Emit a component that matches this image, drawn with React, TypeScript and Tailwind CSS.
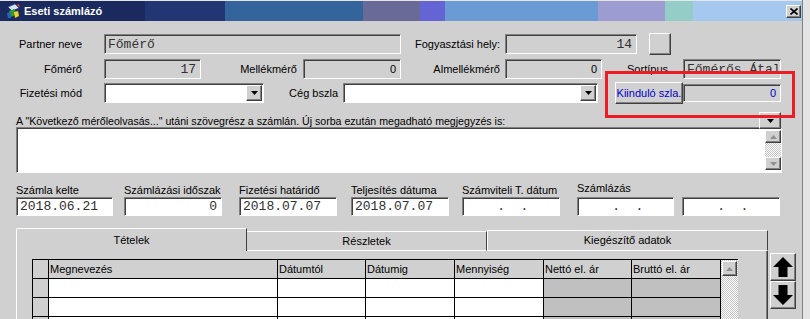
import React from "react";

const SUNK =
  "border border-t-[#808080] border-l-[#808080] border-b-white border-r-white shadow-[inset_1px_1px_0_#404040]";
const RAISE =
  "border border-t-white border-l-white border-b-[#404040] border-r-[#404040] shadow-[inset_-1px_-1px_0_#808080]";
const MONO = "font-['Liberation_Mono','Courier_New',monospace] text-[13px]";

function Field({
  w,
  children,
  white = false,
  right = false,
  mono = true,
  extra = "",
}: {
  w: string;
  children?: React.ReactNode;
  white?: boolean;
  right?: boolean;
  mono?: boolean;
  extra?: string;
}) {
  return (
    <div
      className={`${w} ${SUNK} ${white ? "bg-white" : "bg-[#d0d0d0]"} shrink-0 flex items-center overflow-hidden whitespace-pre ${
        right ? "justify-end pr-[4px]" : "pl-[3px]"
      } ${mono ? MONO + " text-[#303030]" : "text-[11px]"} ${extra}`}
    >
      {children}
    </div>
  );
}

function DownTri({ color = "#000000" }: { color?: string }) {
  return (
    <svg width="7" height="4" viewBox="0 0 7 4">
      <polygon points="0,0 7,0 3.5,4" fill={color} />
    </svg>
  );
}

function UpTri({ color = "#000000" }: { color?: string }) {
  return (
    <svg width="7" height="4" viewBox="0 0 7 4">
      <polygon points="0,4 7,4 3.5,0" fill={color} />
    </svg>
  );
}

function Combo({ w }: { w: string }) {
  return (
    <div className={`${w} h-[20px] ${SUNK} bg-white shrink-0 flex items-center justify-end pr-[1px]`}>
      <div className={`w-[16px] h-[16px] ${RAISE} bg-[#d0d0d0] flex items-center justify-center`}>
        <DownTri />
      </div>
    </div>
  );
}

function TitleIcon() {
  return (
    <svg width="15" height="16" viewBox="0 0 15 16">
      <path d="M2 4 L9 1 L13 5 L6 8 Z" fill="#d8e4f4" stroke="#304e9a" strokeWidth="0.8" />
      <path d="M3 8 L8 6 L11 11 L5 14 Z" fill="#2e9a34" />
      <path d="M8 9 L12 8 L13 13 L9 15 Z" fill="#f2d21e" />
      <path d="M1 10 L4 9 L5 15 L2 15 Z" fill="#2a62c4" />
      <path d="M10 2 L13 1 L14 4 Z" fill="#e04040" />
    </svg>
  );
}

function BigArrow({ up }: { up: boolean }) {
  return (
    <svg width="20" height="20" viewBox="0 0 20 20">
      {up ? (
        <polygon points="10,0 20,10 14.5,10 14.5,20 5.5,20 5.5,10 0,10" fill="#000000" />
      ) : (
        <polygon points="10,20 20,10 14.5,10 14.5,0 5.5,0 5.5,10 0,10" fill="#000000" />
      )}
    </svg>
  );
}

const CHECK =
  "bg-[repeating-conic-gradient(#ffffff_0%_25%,#c4c4c4_0%_50%)] bg-[length:2px_2px]";

const COLS = [
  "w-[16px]",
  "w-[229px]",
  "w-[88px]",
  "w-[89px]",
  "w-[89px]",
  "w-[88px]",
  "w-[89px]",
];
const HEAD = ["", "Megnevezés", "Dátumtól", "Dátumig", "Mennyiség", "Nettó el. ár", "Bruttó el. ár"];

function GridRow({ header }: { header?: boolean }) {
  return (
    <div className="flex">
      {COLS.map((c, i) => {
        let bg = "bg-white";
        if (header || i === 0) bg = "bg-[#d0d0d0]";
        else if (i >= 5) bg = "bg-[#c0c0c0]";
        return (
          <div
            key={i}
            className={`${c} h-[19px] shrink-0 border-r border-b border-black ${bg} flex items-center pl-[1px] whitespace-nowrap overflow-hidden`}
          >
            {header ? HEAD[i] : ""}
          </div>
        );
      })}
    </div>
  );
}

export default function App() {
  return (
    <div className="w-[810px] h-[319px] overflow-hidden bg-[#e4e4e4] flex font-['Liberation_Sans',Arial,sans-serif] text-[11px] leading-[13px] text-black">
      <div className="relative w-[803px] h-[319px] shrink-0 bg-[#d0d0d0] border-r border-[#808080] flex flex-col">
        {/* Title bar */}
        <div className="h-[21px] shrink-0 border-t border-[#e6e6e6] flex items-center bg-[linear-gradient(90deg,#1a2a5e_0px,#1a2a5e_145px,#213672_145px,#213672_225px,#33649c_225px,#33649c_363px,#6a6a98_363px,#6a6a98_420px,#6464d4_420px,#6464d4_445px,#6b9bd4_445px,#6b9bd4_598px,#9c9cd0_598px,#9c9cd0_665px,#94ccc8_665px,#94ccc8_693px,#a4c8ee_693px,#a4c8ee_100%)]">
          <div className="ml-[6px] flex items-center">
            <TitleIcon />
          </div>
          <span className="ml-[3px] text-white font-bold text-[11px]">Eseti számlázó</span>
          <div className={`ml-auto mr-[1px] w-[15px] h-[13px] ${RAISE} bg-[#d0d0d0] flex items-center justify-center`}>
            <svg width="8" height="7" viewBox="0 0 8 7">
              <path d="M0.5 0.5 L7.5 6.5 M7.5 0.5 L0.5 6.5" stroke="#000" strokeWidth="1.6" />
            </svg>
          </div>
        </div>

        {/* Row 1 */}
        <div className="mt-[13px] h-[20px] shrink-0 flex items-center">
          <div className="w-[82px] text-right shrink-0">Partner neve</div>
          <Field w="w-[297px] h-[20px] ml-[22px]">Főmérő</Field>
          <div className="w-[99px] text-right shrink-0">Fogyasztási hely:</div>
          <Field w="w-[132px] h-[20px] ml-[5px]" right>
            14
          </Field>
          <div className={`ml-[12px] w-[22px] h-[22px] ${RAISE} bg-[#d0d0d0] shrink-0`} />
        </div>

        {/* Row 2 */}
        <div className="mt-[5px] h-[20px] shrink-0 flex items-center">
          <div className="w-[82px] text-right shrink-0">Főmérő</div>
          <Field w="w-[97px] h-[20px] ml-[22px]" right>
            17
          </Field>
          <div className="w-[96px] text-right shrink-0">Mellékmérő</div>
          <Field w="w-[98px] h-[20px] ml-[6px]" right mono={false}>
            0
          </Field>
          <div className="w-[99px] text-right shrink-0">Almellékmérő</div>
          <Field w="w-[97px] h-[20px] ml-[5px]" right mono={false}>
            0
          </Field>
          <div className="w-[66px] text-right shrink-0">Sortípus</div>
          <Field w="w-[98px] h-[20px] ml-[15px]">Főmérős Átal</Field>
        </div>

        {/* Row 3 */}
        <div className="mt-[4px] h-[20px] shrink-0 flex items-center">
          <div className="w-[82px] text-right shrink-0">Fizetési mód</div>
          <div className="ml-[22px]">
            <Combo w="w-[160px]" />
          </div>
          <div className="w-[74px] text-right shrink-0">Cég bszla</div>
          <div className="ml-[5px]">
            <Combo w="w-[255px]" />
          </div>
          <div
            className={`ml-[17px] w-[68px] h-[22px] ${RAISE} bg-[#d0d0d0] shrink-0 flex items-center justify-center text-[#0000c8] whitespace-nowrap`}
          >
            Kiinduló szla.
          </div>
          <Field w="w-[98px] h-[18px]" right mono={false} extra="text-[#0000c8]">
            0
          </Field>
        </div>

        {/* Memo */}
        <div className="relative mt-[12px] shrink-0">
          <div className="pl-[16px] leading-[12px] h-[12px] whitespace-nowrap text-[10.6px]">
            A "Következő mérőleolvasás..." utáni szövegrész a számlán. Új sorba ezután megadható megjegyzés is:
          </div>
          <div className={`ml-[16px] w-[766px] h-[46px] ${SUNK} bg-white flex justify-end`}>
            <div className="w-[16px] mt-[2px] flex flex-col">
              <div className={`h-[13px] ${RAISE} bg-[#d0d0d0] flex items-center justify-center`}>
                <UpTri color="#909090" />
              </div>
              <div className={`h-[14px] ${CHECK}`} />
              <div className={`h-[13px] ${RAISE} bg-[#d0d0d0] flex items-center justify-center`}>
                <DownTri color="#909090" />
              </div>
            </div>
          </div>
          <div
            className={`absolute left-[759px] top-[-3px] w-[22px] h-[17px] ${RAISE} bg-[#d0d0d0] flex items-center justify-center`}
          >
            <DownTri />
          </div>
        </div>

        {/* Dates */}
        <div className="mt-[10px] shrink-0 flex items-start">
          <div className="ml-[16px] w-[97px] flex flex-col">
            <div className="h-[13px] pt-[1px] whitespace-nowrap">Számla kelte</div>
            <Field w="w-[97px] h-[19px] mt-[1px]" white>
              2018.06.21
            </Field>
          </div>
          <div className="ml-[11px] w-[98px] flex flex-col">
            <div className="h-[13px] pt-[1px] whitespace-nowrap">Számlázási időszak</div>
            <Field w="w-[98px] h-[19px] mt-[1px]" white right>
              0
            </Field>
          </div>
          <div className="ml-[17px] w-[98px] flex flex-col">
            <div className="h-[13px] pt-[1px] whitespace-nowrap">Fizetési határidő</div>
            <Field w="w-[98px] h-[19px] mt-[1px]" white>
              2018.07.07
            </Field>
          </div>
          <div className="ml-[14px] w-[98px] flex flex-col">
            <div className="h-[13px] pt-[1px] whitespace-nowrap">Teljesítés dátuma</div>
            <Field w="w-[98px] h-[19px] mt-[1px]" white>
              2018.07.07
            </Field>
          </div>
          <div className="ml-[13px] w-[98px] flex flex-col">
            <div className="h-[13px] pt-[1px] whitespace-nowrap">Számviteli T. dátum</div>
            <Field w="w-[98px] h-[19px] mt-[1px]" white>
              {"    .  .  "}
            </Field>
          </div>
          <div className="ml-[17px] flex flex-col">
            <div className="h-[13px] -mt-[1px] mb-[1px] whitespace-nowrap">Számlázás</div>
            <div className="flex mt-[1px]">
              <Field w="w-[97px] h-[19px]" white>
                {"    .  .  "}
              </Field>
              <Field w="w-[98px] h-[19px] ml-[8px]" white>
                {"    .  .  "}
              </Field>
            </div>
          </div>
        </div>

        {/* Tabs */}
        <div className="mt-[12px] flex-1 min-h-0 flex overflow-hidden">
          <div className="ml-[16px] w-[752px] shrink-0 flex flex-col">
            <div className="h-[23px] shrink-0 flex items-end">
              <div className="w-[231px] h-[23px] border-l border-t border-r border-white border-r-[#404040] rounded-tl-[2px] flex items-center justify-center">
                Tételek
              </div>
              <div className="w-[240px] h-[20px] border-t border-b border-r border-white border-r-[#404040] flex items-center justify-center">
                Részletek
              </div>
              <div className="w-[281px] h-[21px] border-t border-l border-b border-r border-white border-r-[#404040] flex items-center justify-center">
                Kiegészítő adatok
              </div>
            </div>
            <div className="flex-1 border-l border-r border-white border-r-[#404040] shadow-[inset_-1px_0_0_#808080] pl-[15px] pt-[8px]">
              <div className="flex">
                <div className="border-l border-t border-black">
                  <GridRow header />
                  <GridRow />
                  <GridRow />
                  <GridRow />
                </div>
                <div className={`w-[17px] shrink-0 flex flex-col ${CHECK}`}>
                  <div className="h-[1px] bg-black" />
                  <div className={`mx-[1px] mt-[1px] h-[15px] ${RAISE} bg-[#d0d0d0] flex items-center justify-center`}>
                    <UpTri color="#909090" />
                  </div>
                </div>
              </div>
            </div>
          </div>
          <div className="ml-[2px] mt-[25px] flex flex-col shrink-0">
            <div className={`w-[26px] h-[28px] ${RAISE} bg-[#d0d0d0] flex items-center justify-center`}>
              <BigArrow up />
            </div>
            <div className={`w-[26px] h-[28px] ${RAISE} bg-[#d0d0d0] flex items-center justify-center`}>
              <BigArrow up={false} />
            </div>
          </div>
        </div>

        {/* Red highlight box */}
        <div className="absolute left-[605px] top-[71px] w-[190px] h-[47px] border-[3px] border-[#ec1c24] pointer-events-none" />
      </div>
    </div>
  );
}
